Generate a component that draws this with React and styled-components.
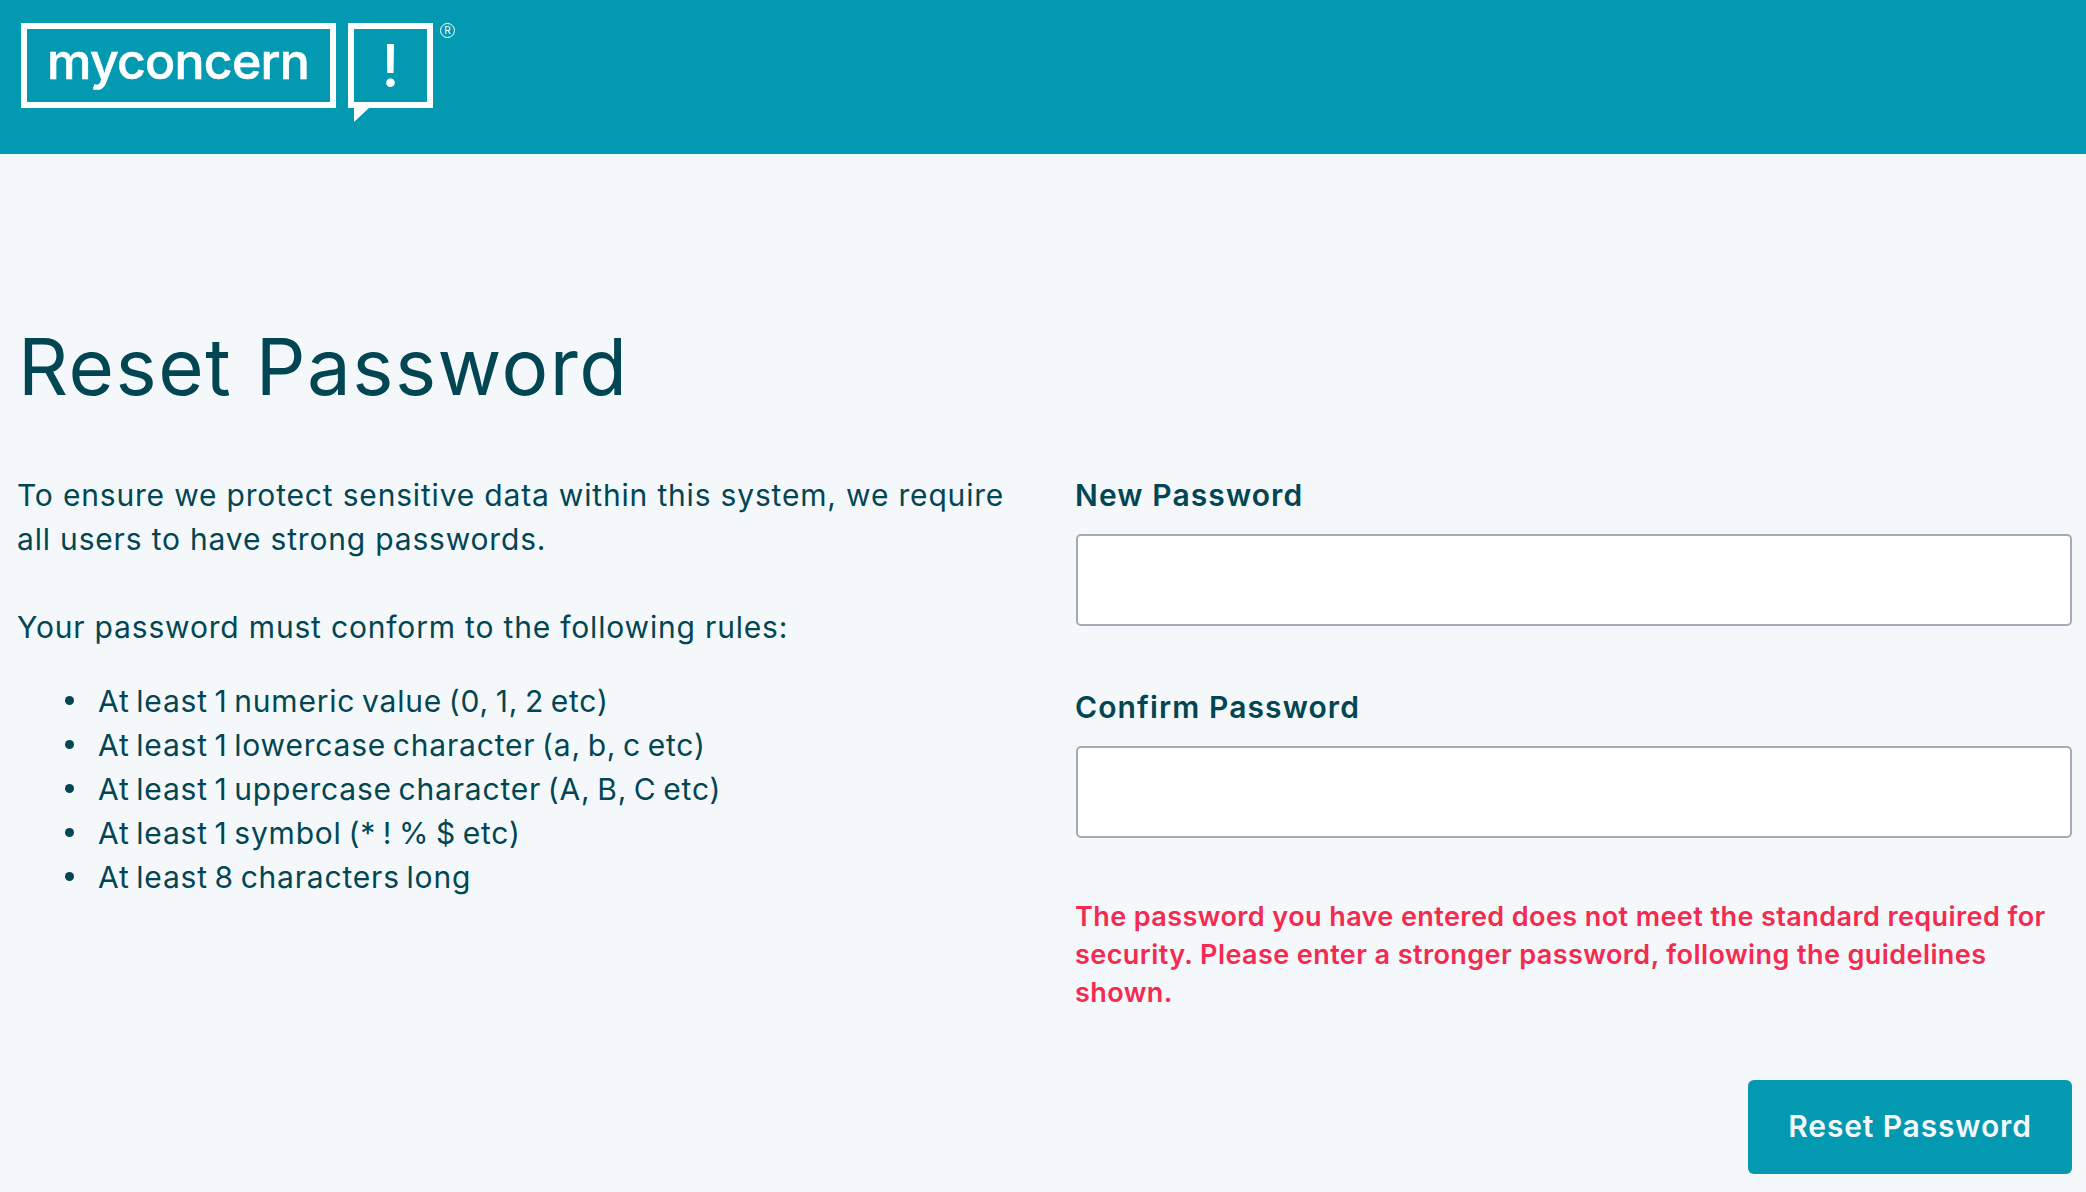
import React from "react";
import styled, { createGlobalStyle } from "styled-components";

const GlobalStyle = createGlobalStyle`
  html, body {
    margin: 0;
    background: #f4f8fb;
    font-family: Inter, "Open Sans", sans-serif;
    color: #024653;
  }
`;

const teal = "#0299b1";

const Header = styled.header`
  height: 154px;
  background: ${teal};
  padding: 23px 0 0 21px;
  box-sizing: border-box;
  display: flex;
  align-items: flex-start;
`;

const LogoBox = styled.div`
  width: 315px;
  height: 85px;
  box-sizing: border-box;
  border: 6px solid #fff;
  color: #fff;
  font-size: 50px;
  font-weight: 500;
  letter-spacing: -0.75px;
  line-height: 64px;
  padding-left: 20px;
  -webkit-text-stroke: 0.6px #fff;
`;

const Bubble = styled.div`
  position: relative;
  width: 85px;
  height: 85px;
  margin-left: 12px;
  box-sizing: border-box;
  border: 6px solid #fff;
  color: #fff;
  font-size: 59px;
  font-weight: 500;
  line-height: 73px;
  text-align: center;
`;

const BubbleTail = styled.svg`
  position: absolute;
  left: 0;
  top: 79px;
`;

const Registered = styled.span`
  width: 15px;
  height: 15px;
  margin-left: 7px;
  box-sizing: border-box;
  border: 1px solid #fff;
  border-radius: 50%;
  color: #fff;
  font-size: 10px;
  line-height: 13px;
  text-align: center;
`;

const Main = styled.main`
  padding: 167px 14px 0 17px;
`;

const Title = styled.h1`
  margin: 0 0 0 1px;
  font-size: 78px;
  font-weight: 400;
  line-height: 92px;
  letter-spacing: 1.5px;
`;

const Columns = styled.div`
  display: grid;
  grid-template-columns: 1059px 1fr;
  margin-top: 61px;
`;

const IntroColumn = styled.div`
  margin-top: -1px;
`;

const Paragraph = styled.p`
  margin: 0 0 44px;
  font-size: 30px;
  letter-spacing: 0.82px;
  line-height: 44px;
  width: 1010px;
`;

const Rules = styled.ul`
  list-style: none;
  margin: -14px 0 0;
  padding: 0 0 0 81px;
  font-size: 30px;
  letter-spacing: 0.8px;
  word-spacing: -2.5px;
  line-height: 44px;
`;

const Rule = styled.li`
  position: relative;

  &::before {
    content: "";
    position: absolute;
    left: -33px;
    top: 17px;
    width: 9px;
    height: 9px;
    border-radius: 50%;
    background: #024653;
  }
`;

const Label = styled.label`
  display: block;
  margin: -1px 0 17px -1px;
  font-size: 30px;
  font-weight: 600;
  letter-spacing: 1.1px;
  line-height: 44px;
`;

const Input = styled.input`
  display: block;
  width: 100%;
  height: 92px;
  box-sizing: border-box;
  background: #fff;
  border: 2px solid #a8a9b6;
  border-radius: 5px;
  margin-bottom: 60px;
`;

const ErrorText = styled.p`
  margin: 8px 0 0 -1px;
  color: #f52a50;
  font-size: 27px;
  font-weight: 600;
  letter-spacing: 0.42px;
  line-height: 38px;
`;

const ButtonRow = styled.div`
  display: flex;
  justify-content: flex-end;
  margin-top: 68px;
`;

const Button = styled.button`
  width: 324px;
  height: 94px;
  padding: 0 0 2px;
  background: ${teal};
  border: none;
  border-radius: 6px;
  color: #f4f8fb;
  font: 600 30px Inter, sans-serif;
  letter-spacing: 0.85px;
`;

export default function App() {
  return (
    <>
      <GlobalStyle />
      <Header>
        <LogoBox>myconcern</LogoBox>
        <Bubble>
          !
          <BubbleTail width="15" height="14" viewBox="0 0 15 14">
            <path d="M0 0H15L0 14Z" fill="#fff" />
          </BubbleTail>
        </Bubble>
        <Registered>R</Registered>
      </Header>
      <Main>
        <Title>Reset Password</Title>
        <Columns>
          <IntroColumn>
            <Paragraph>
              To ensure we protect sensitive data within this system, we require all users to have strong passwords.
            </Paragraph>
            <Paragraph>Your password must conform to the following rules:</Paragraph>
            <Rules>
              <Rule>At least 1 numeric value (0, 1, 2 etc)</Rule>
              <Rule>At least 1 lowercase character (a, b, c etc)</Rule>
              <Rule>At least 1 uppercase character (A, B, C etc)</Rule>
              <Rule>At least 1 symbol (* ! % $ etc)</Rule>
              <Rule>At least 8 characters long</Rule>
            </Rules>
          </IntroColumn>
          <div>
            <Label>New Password</Label>
            <Input type="password" />
            <Label>Confirm Password</Label>
            <Input type="password" />
            <ErrorText>
              The password you have entered does not meet the standard required for security. Please enter a stronger password, following the guidelines shown.
            </ErrorText>
            <ButtonRow>
              <Button>Reset Password</Button>
            </ButtonRow>
          </div>
        </Columns>
      </Main>
    </>
  );
}
